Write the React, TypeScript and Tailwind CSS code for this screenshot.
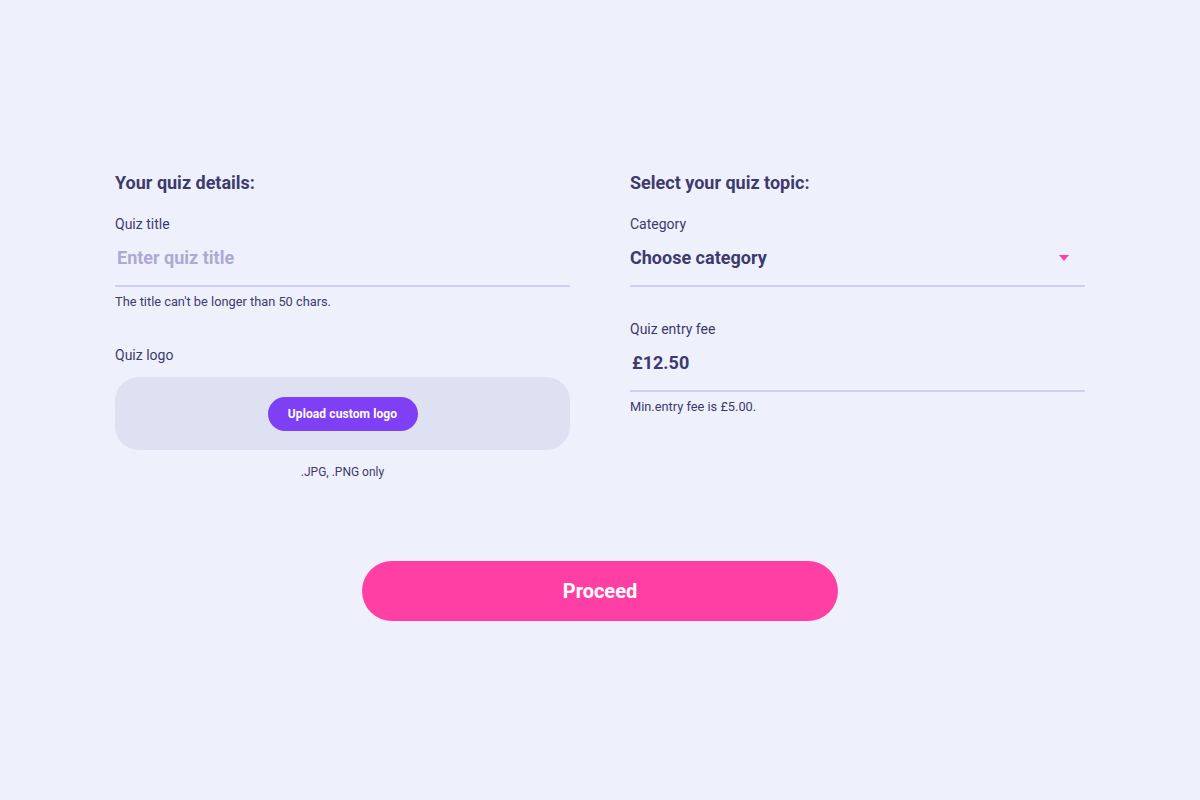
const Field = ({ label, children, hint }: { label: string; children: React.ReactNode; hint?: string }) => (
  <div>
    <p className="text-[14px] leading-[17px] text-[#3d3a6e]">{label}</p>
    <div className="mt-[13px] h-[41px] border-b-2 border-[#cfd0ee] flex items-start">{children}</div>
    {hint && <p className="mt-[7px] text-[12.8px] leading-[15px] text-[#3d3a6e]">{hint}</p>}
  </div>
);

export default function App() {
  return (
    <div
      className="w-full min-h-[800px] bg-[#eef1fb] flex flex-col items-center pt-[172px]"
      style={{ fontFamily: "Roboto, 'Liberation Sans', sans-serif" }}
    >
      <div className="w-[970px] grid grid-cols-2 gap-x-[60px]">
        <div>
          <h2 className="text-[18px] leading-[22px] font-bold text-[#3d3a6e]">Your quiz details:</h2>
          <div className="mt-[22px]">
            <Field label="Quiz title" hint="The title can't be longer than 50 chars.">
              <input
                type="text"
                placeholder="Enter quiz title"
                className="w-full bg-transparent outline-none pl-[2px] text-[18px] leading-[22px] font-bold text-[#3d3a6e] placeholder:text-[#aca9d2] mt-[1px]"
              />
            </Field>
          </div>
          <p className="mt-[38px] text-[14px] leading-[17px] text-[#3d3a6e]">Quiz logo</p>
          <div className="mt-[13px] h-[73px] rounded-[24px] bg-[#dde1f1] flex items-center justify-center">
            <button
              className="w-[150px] h-[34px] rounded-full bg-[#7f3ff5] text-white text-[12px] font-bold tracking-[0.1px]"
              style={{ fontFamily: "Roboto, sans-serif" }}
            >
              Upload custom logo
            </button>
          </div>
          <p className="mt-[15px] text-center text-[12px] leading-[14px] text-[#3d3a6e]">.JPG, .PNG only</p>
        </div>

        <div>
          <h2 className="text-[18px] leading-[22px] font-bold text-[#3d3a6e]">Select your quiz topic:</h2>
          <div className="mt-[22px]">
            <Field label="Category">
              <div className="w-full flex items-center justify-between mt-[1px] h-[22px]">
                <span className="text-[18px] leading-[22px] font-bold text-[#3d3a6e]">Choose category</span>
                <span className="mr-[16px] w-0 h-0 border-l-[5px] border-r-[5px] border-t-[6px] border-l-transparent border-r-transparent border-t-[#ff3fa4]" />
              </div>
            </Field>
          </div>
          <div className="mt-[34px]">
            <Field label="Quiz entry fee" hint="Min.entry fee is £5.00.">
              <span className="pl-[2px] text-[18px] leading-[22px] font-bold text-[#3d3a6e] mt-[1px]">£12.50</span>
            </Field>
          </div>
        </div>
      </div>

      <button className="mt-[82px] w-[476px] h-[60px] rounded-full bg-[#ff3fa4] text-white text-[20px] font-bold">
        Proceed
      </button>
    </div>
  );
}
